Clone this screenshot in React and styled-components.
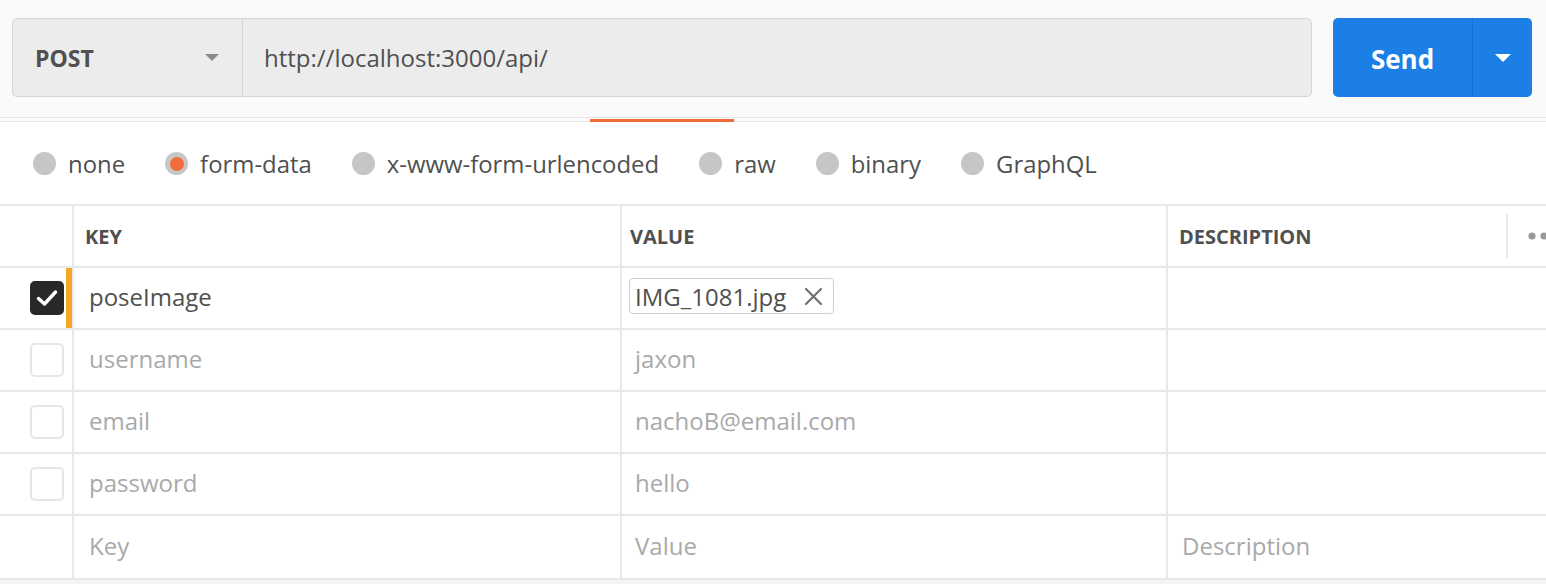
import React from "react";
import styled, { createGlobalStyle } from "styled-components";

const GlobalStyle = createGlobalStyle`
  html, body {
    margin: 0;
    padding: 0;
    background: #ffffff;
    overflow: hidden;
  }
  body {
    font-family: "Open Sans", "Liberation Sans", sans-serif;
    color: #505050;
  }
`;

const Page = styled.div`
  width: 1546px;
  height: 584px;
  display: flex;
  flex-direction: column;
  background: #f5f5f5;
`;

const RequestBar = styled.div`
  display: flex;
  gap: 21px;
  padding: 18px 14px 20px 12px;
  background: #fafafa;
`;

const UrlGroup = styled.div`
  flex: 1;
  height: 79px;
  box-sizing: border-box;
  display: flex;
  background: #ececec;
  border: 1.5px solid #d4d4d4;
  border-radius: 5px;
`;

const MethodSelect = styled.div`
  width: 230px;
  box-sizing: border-box;
  display: flex;
  align-items: center;
  justify-content: space-between;
  padding: 0 23px 0 22px;
  border-right: 1.5px solid #d4d4d4;
  font-size: 23px;
  font-weight: 700;
  color: #505050;
`;

const UrlText = styled.div`
  display: flex;
  align-items: center;
  padding-left: 21px;
  font-size: 24px;
  color: #505050;
`;

const Caret = styled.span`
  width: 0;
  height: 0;
  border-left: ${({ $size }) => $size}px solid transparent;
  border-right: ${({ $size }) => $size}px solid transparent;
  border-top: ${({ $size }) => $size}px solid ${({ $color }) => $color};
`;

const SendGroup = styled.div`
  width: 199px;
  height: 79px;
  display: flex;
  background: #1b7fe6;
  border-radius: 5px;
  color: #ffffff;
`;

const SendMain = styled.div`
  width: 139px;
  display: flex;
  align-items: center;
  justify-content: center;
  padding-top: 2px;
  font-size: 26px;
  font-weight: 700;
  border-right: 1px solid #1570cf;
`;

const SendMore = styled.div`
  flex: 1;
  display: flex;
  align-items: center;
  justify-content: center;
`;

const TabEdge = styled.div`
  height: 3px;
  display: flex;
  align-items: flex-end;
  padding-left: 590px;
  background: #fafafa;
  border-top: 1px solid #e6e6e6;
  border-bottom: 1px solid #e6e6e6;
`;

const ActiveTab = styled.div`
  width: 144px;
  height: 3px;
  margin-bottom: -1px;
  background: #f26b3a;
`;

const BodyTypes = styled.div`
  height: 82px;
  display: flex;
  align-items: center;
  gap: 40px;
  padding: 1px 0 0 33px;
  box-sizing: border-box;
  background: #ffffff;
`;

const RadioOption = styled.label`
  display: flex;
  align-items: center;
  gap: 12px;
  font-size: 23.9px;
  color: #505050;
`;

const RadioDot = styled.span`
  width: 23px;
  height: 23px;
  border-radius: 50%;
  background: #c6c6c6;
  display: flex;
  align-items: center;
  justify-content: center;

  &::after {
    content: "";
    width: 14px;
    height: 14px;
    border-radius: 50%;
    background: ${({ $checked }) => ($checked ? "#f26b3a" : "transparent")};
  }
`;

const Table = styled.div`
  display: grid;
  grid-template-columns: 74px 548px 546px 1fr;
  grid-auto-rows: 62px;
  background: #ffffff;
  border-top: 2px solid #e8e8e8;
  border-bottom: 2px solid #e8e8e8;
`;

const Cell = styled.div`
  display: flex;
  align-items: center;
  box-sizing: border-box;
  padding-left: ${({ $pad }) => $pad || 0}px;
  padding-bottom: 4px;
  border-right: ${({ $edge }) => ($edge ? "none" : "2px solid #e8e8e8")};
  border-bottom: ${({ $last }) => ($last ? "none" : "2px solid #e8e8e8")};
  font-size: 24px;
  color: ${({ $muted }) => ($muted ? "#a9a9a9" : "#505050")};
  overflow: hidden;
  white-space: nowrap;
`;

const HeadCell = styled(Cell)`
  font-size: 20px;
  font-weight: 700;
  color: #505050;
  padding-bottom: 0;
`;

const LastHeadCell = styled(HeadCell)`
  justify-content: space-between;
`;

const ColumnTools = styled.div`
  display: flex;
  align-items: center;
  gap: 20px;
  height: 44px;
  margin-right: -22px;
`;

const ToolDivider = styled.span`
  width: 2px;
  align-self: stretch;
  background: #e8e8e8;
`;

const CheckCell = styled(Cell)`
  justify-content: flex-end;
  padding-right: 8px;
  padding-bottom: 0;
  box-shadow: ${({ $active }) => ($active ? "inset -6px 0 0 #f5a623" : "none")};
`;

const Checkbox = styled.span`
  width: 34px;
  height: 34px;
  box-sizing: border-box;
  border-radius: 5px;
  display: flex;
  align-items: center;
  justify-content: center;
  background: ${({ $checked }) => ($checked ? "#282828" : "#ffffff")};
  border: 2px solid ${({ $checked }) => ($checked ? "#282828" : "#e6e6e6")};
`;

const FileChip = styled.span`
  display: inline-flex;
  align-items: center;
  gap: 18px;
  height: 36px;
  box-sizing: border-box;
  padding: 0 10px 0 5px;
  border: 1.5px solid #cfcfcf;
  border-radius: 4px;
  font-size: 24px;
  color: #505050;
`;

const Footer = styled.div`
  flex: 1;
  background: #f5f5f5;
`;

const CheckMark = () => (
  <svg width="22" height="18" viewBox="0 0 22 18">
    <path d="M2.5 9.5 L8.5 15 L19.5 3" fill="none" stroke="#ffffff" strokeWidth="3.4" strokeLinecap="round" strokeLinejoin="round" />
  </svg>
);

const CloseIcon = () => (
  <svg width="19" height="19" viewBox="0 0 19 19">
    <path d="M2 2 L17 17 M17 2 L2 17" stroke="#707070" strokeWidth="2.2" strokeLinecap="round" />
  </svg>
);

const Dots = () => (
  <svg width="40" height="10" viewBox="0 0 40 10">
    <circle cx="4" cy="5" r="3.6" fill="#999999" />
    <circle cx="16" cy="5" r="3.6" fill="#999999" />
    <circle cx="28" cy="5" r="3.6" fill="#999999" />
  </svg>
);

const bodyTypes = [
  { label: "none" },
  { label: "form-data", checked: true },
  { label: "x-www-form-urlencoded" },
  { label: "raw" },
  { label: "binary" },
  { label: "GraphQL" },
];

const rows = [
  { key: "poseImage", file: "IMG_1081.jpg", checked: true },
  { key: "username", value: "jaxon" },
  { key: "email", value: "nachoB@email.com" },
  { key: "password", value: "hello" },
];

const App = () => (
  <>
    <GlobalStyle />
    <Page>
      <RequestBar>
        <UrlGroup>
          <MethodSelect>
            POST
            <Caret $size={7} $color="#8a8a8a" />
          </MethodSelect>
          <UrlText>http://localhost:3000/api/</UrlText>
        </UrlGroup>
        <SendGroup>
          <SendMain>Send</SendMain>
          <SendMore>
            <Caret $size={8} $color="#ffffff" />
          </SendMore>
        </SendGroup>
      </RequestBar>

      <TabEdge>
        <ActiveTab />
      </TabEdge>

      <BodyTypes>
        {bodyTypes.map((t) => (
          <RadioOption key={t.label}>
            <RadioDot $checked={t.checked} />
            {t.label}
          </RadioOption>
        ))}
      </BodyTypes>

      <Table>
        <HeadCell />
        <HeadCell $pad={11}>KEY</HeadCell>
        <HeadCell $pad={8}>VALUE</HeadCell>
        <LastHeadCell $pad={11} $edge>
          DESCRIPTION
          <ColumnTools>
            <ToolDivider />
            <Dots />
          </ColumnTools>
        </LastHeadCell>

        {rows.map((r) => (
          <React.Fragment key={r.key}>
            <CheckCell $active={r.checked}>
              <Checkbox $checked={r.checked}>{r.checked && <CheckMark />}</Checkbox>
            </CheckCell>
            <Cell $pad={15} $muted={!r.checked}>{r.key}</Cell>
            <Cell $pad={r.file ? 7 : 13} $muted={!r.checked}>
              {r.file ? (
                <FileChip>
                  {r.file}
                  <CloseIcon />
                </FileChip>
              ) : (
                r.value
              )}
            </Cell>
            <Cell $edge />
          </React.Fragment>
        ))}

        <Cell $last />
        <Cell $last $pad={15} $muted>Key</Cell>
        <Cell $last $pad={13} $muted>Value</Cell>
        <Cell $last $edge $pad={14} $muted>Description</Cell>
      </Table>
      <Footer />
    </Page>
  </>
);

export default App;
